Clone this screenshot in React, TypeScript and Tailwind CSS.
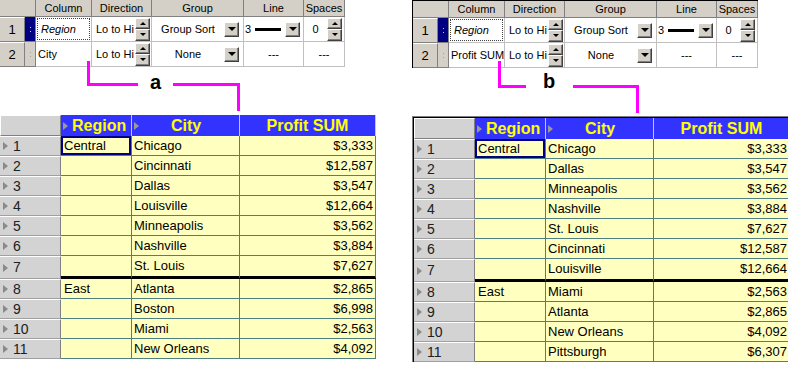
import React from 'react';

type Row = {
  n: number;
  region?: string;
  city: string;
  profit: string;
  focus?: boolean;
  groupEnd?: boolean;
};

const rowsA: Row[] = [
  { n: 1, region: 'Central', city: 'Chicago', profit: '$3,333', focus: true },
  { n: 2, city: 'Cincinnati', profit: '$12,587' },
  { n: 3, city: 'Dallas', profit: '$3,547' },
  { n: 4, city: 'Louisville', profit: '$12,664' },
  { n: 5, city: 'Minneapolis', profit: '$3,562' },
  { n: 6, city: 'Nashville', profit: '$3,884' },
  { n: 7, city: 'St. Louis', profit: '$7,627', groupEnd: true },
  { n: 8, region: 'East', city: 'Atlanta', profit: '$2,865' },
  { n: 9, city: 'Boston', profit: '$6,998' },
  { n: 10, city: 'Miami', profit: '$2,563' },
  { n: 11, city: 'New Orleans', profit: '$4,092' },
];

const rowsB: Row[] = [
  { n: 1, region: 'Central', city: 'Chicago', profit: '$3,333', focus: true },
  { n: 2, city: 'Dallas', profit: '$3,547' },
  { n: 3, city: 'Minneapolis', profit: '$3,562' },
  { n: 4, city: 'Nashville', profit: '$3,884' },
  { n: 5, city: 'St. Louis', profit: '$7,627' },
  { n: 6, city: 'Cincinnati', profit: '$12,587' },
  { n: 7, city: 'Louisville', profit: '$12,664', groupEnd: true },
  { n: 8, region: 'East', city: 'Miami', profit: '$2,563' },
  { n: 9, city: 'Atlanta', profit: '$2,865' },
  { n: 10, city: 'New Orleans', profit: '$4,092' },
  { n: 11, city: 'Pittsburgh', profit: '$6,307' },
];

const raised =
  'bg-[#d4d0c8] border border-t-white border-l-white border-r-[#404040] border-b-[#404040] shadow-[inset_-1px_-1px_0_#808080]';

const SpinButtons = () => (
  <div className="flex flex-col w-[15px] h-[23px] shrink-0">
    <div className={`flex-1 flex items-center justify-center ${raised}`}>
      <div className="w-0 h-0 border-x-[3px] border-x-transparent border-b-[3px] border-b-black" />
    </div>
    <div className={`flex-1 flex items-center justify-center ${raised}`}>
      <div className="w-0 h-0 border-x-[3px] border-x-transparent border-t-[3px] border-t-black" />
    </div>
  </div>
);

const DropButton = () => (
  <div className={`w-[15px] h-[15px] shrink-0 flex items-center justify-center ${raised}`}>
    <div className="w-0 h-0 border-x-[4px] border-x-transparent border-t-[4px] border-t-black" />
  </div>
);

const Dots = ({ light }: { light?: boolean }) => (
  <div className="flex flex-col gap-[3px] items-center">
    <div className={light ? 'w-px h-px bg-[#c8c8ff]' : 'w-px h-px bg-[#a0a0a0]'} />
    <div className={light ? 'w-px h-px bg-[#c8c8ff]' : 'w-px h-px bg-[#a0a0a0]'} />
  </div>
);

const headCell = 'h-[17px] flex items-center justify-center bg-[#d4d0c8] border-r border-b border-[#808080]';
const cell = 'h-full border-r border-b border-[#c0c0c0] flex items-center whitespace-nowrap';

const SetupGrid = ({ second, framed }: { second: string; framed?: boolean }) => (
  <div className={framed ? 'w-fit border-t border-l border-black text-[11px]' : 'w-fit text-[11px]'}>
    <div className="flex">
      <div className={`${headCell} w-[36px]`} />
      <div className={`${headCell} w-[56px]`}>Column</div>
      <div className={`${headCell} w-[60px]`}>Direction</div>
      <div className={`${headCell} w-[92px]`}>Group</div>
      <div className={`${headCell} w-[60px]`}>Line</div>
      <div className={`${headCell} w-[41px]`}>Spaces</div>
    </div>

    <div className="flex h-[25px]">
      <div className="w-[25px] h-full bg-[#d4d0c8] border-t border-t-white border-r border-b border-[#808080] flex items-center justify-center text-[13px]">
        1
      </div>
      <div className="w-[11px] h-full bg-[#000080] border-r border-b border-[#808080] flex items-center justify-center">
        <Dots light />
      </div>
      <div className={`${cell} w-[56px] p-[1px]`}>
        <div className="w-full h-full border border-dotted border-[#404040] flex items-center pl-[3px] italic">
          Region
        </div>
      </div>
      <div className={`${cell} w-[60px] justify-between pl-[4px] pr-[1px]`}>
        <span>Lo to Hi</span>
        <SpinButtons />
      </div>
      <div className={`${cell} w-[92px] pr-[4px]`}>
        <span className="flex-1 text-center">Group Sort</span>
        <DropButton />
      </div>
      <div className={`${cell} w-[60px] pl-[1px] pr-[3px]`}>
        <span>3</span>
        <div className="w-[26px] h-[3px] bg-black ml-[4px]" />
        <div className="flex-1" />
        <DropButton />
      </div>
      <div className={`${cell} w-[41px] pr-[2px]`}>
        <span className="flex-1 text-center">0</span>
        <SpinButtons />
      </div>
    </div>

    <div className="flex h-[25px]">
      <div className="w-[25px] h-full bg-[#d4d0c8] border-t border-t-white border-r border-b border-[#808080] flex items-center justify-center text-[13px]">
        2
      </div>
      <div className="w-[11px] h-full bg-[#d4d0c8] border-r border-b border-[#808080] flex items-center justify-center">
        <Dots />
      </div>
      <div className={`${cell} w-[56px] pl-[2px] overflow-hidden`}>{second}</div>
      <div className={`${cell} w-[60px] justify-between pl-[4px] pr-[1px]`}>
        <span>Lo to Hi</span>
        <SpinButtons />
      </div>
      <div className={`${cell} w-[92px] pr-[4px]`}>
        <span className="flex-1 text-center">None</span>
        <DropButton />
      </div>
      <div className={`${cell} w-[60px] justify-center`}>---</div>
      <div className={`${cell} w-[41px] justify-center`}>---</div>
    </div>
  </div>
);

const HeadTri = () => (
  <div className="w-0 h-0 shrink-0 border-y-[4px] border-y-transparent border-l-[5px] border-l-[#9a9a9a]" />
);

const blueHead = 'h-full bg-[#3333ff] border-r border-[#c8c8c8] flex items-center text-[16px] font-bold text-[#ffff00]';
const dataCell = 'h-full bg-[#ffffc0] border-r border-b border-[#4f8080] flex items-center text-[13px]';

const DataTable = ({ rows, framed }: { rows: Row[]; framed?: boolean }) => (
  <div className={framed ? 'w-fit border-t border-l border-[#808080]' : 'w-fit'}>
    <div className={framed ? 'border-t border-l border-black' : ''}>
      <div className="flex h-[21px]">
        <div className="w-[61px] h-full bg-[#d3d3d3] border-t border-l border-white border-r border-r-[#808080] border-b border-b-[#808080]" />
        <div className={`${blueHead} w-[71px] pl-[2px] gap-[4px]`}>
          <HeadTri />
          <span>Region</span>
        </div>
        <div className={`${blueHead} w-[108px] pl-[2px]`}>
          <HeadTri />
          <span className="flex-1 text-center pr-[6px]">City</span>
        </div>
        <div className={`${blueHead} w-[136px] justify-center`}>Profit SUM</div>
      </div>

      {rows.map((r) => {
        const end = r.groupEnd ? 'border-b-[3px] border-b-black' : '';
        return (
          <div key={r.n} className={r.groupEnd ? 'flex h-[23px]' : 'flex h-[20px]'}>
            <div className="w-[61px] h-full bg-[#d3d3d3] border-t border-t-white border-b border-b-[#a0a0a0] border-r border-r-[#808080] flex items-center pl-[3px] gap-[5px] text-[14px] text-[#202020]">
              <div className="w-0 h-0 border-y-[4px] border-y-transparent border-l-[5px] border-l-[#8a8a8a]" />
              <span>{r.n}</span>
            </div>
            <div className={`${dataCell} ${end} w-[71px]`}>
              {r.focus ? (
                <div className="w-full h-full border-2 border-[#000080] flex items-center pl-[1px]">{r.region}</div>
              ) : (
                <span className="pl-[3px]">{r.region}</span>
              )}
            </div>
            <div className={`${dataCell} ${end} w-[108px] pl-[2px]`}>{r.city}</div>
            <div className={`${dataCell} ${end} w-[136px] justify-end pr-[2px]`}>{r.profit}</div>
          </div>
        );
      })}
    </div>
  </div>
);

export default function App() {
  return (
    <div className="flex w-[788px] h-[375px] overflow-hidden bg-white text-black font-['Liberation_Sans',Arial,sans-serif]">
      <div className="w-[412px] shrink-0 flex flex-col">
        <SetupGrid second="City" />
        <div className="relative h-[48px]">
          <svg className="absolute left-0 top-[-6px] overflow-visible" width="260" height="54">
            <path d="M88.5 0 V23.5 H138 M173 23.5 H238.5 V50" fill="none" stroke="#ff00ff" strokeWidth="3" />
          </svg>
          <span className="absolute left-[150px] top-[3px] text-[20px] leading-[24px] font-bold">a</span>
        </div>
        <DataTable rows={rowsA} />
      </div>

      <div className="flex-1 min-w-0 flex flex-col">
        <SetupGrid second="Profit SUM" framed />
        <div className="relative h-[48px]">
          <svg className="absolute left-0 top-[-7px] overflow-visible" width="260" height="56">
            <path d="M87.5 0 V25.5 H114 M161 25.5 H225.5 V52" fill="none" stroke="#ff00ff" strokeWidth="3" />
          </svg>
          <span className="absolute left-[131px] top-[1px] text-[20px] leading-[24px] font-bold">b</span>
        </div>
        <DataTable rows={rowsB} framed />
      </div>
    </div>
  );
}
